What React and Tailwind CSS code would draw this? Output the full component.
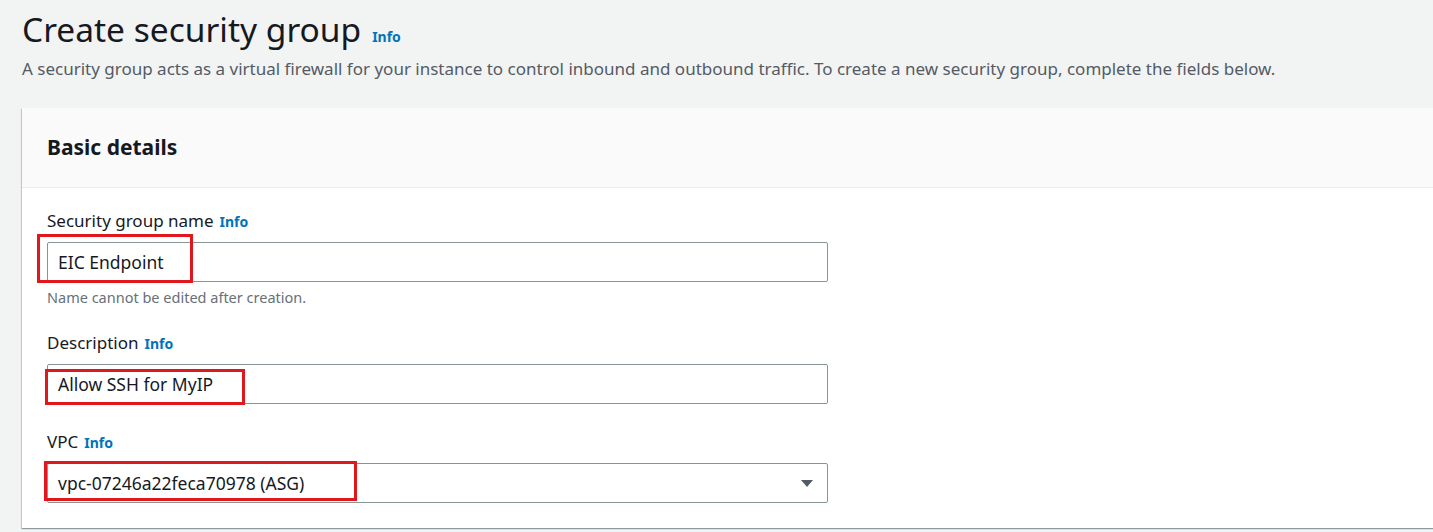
import React from 'react';

const Info = () => (
  <span className="ml-[6px] text-[14px] font-bold text-[#0073bb]">Info</span>
);

const Field = ({ label, children, hint }) => (
  <div>
    <div className="text-[17px] leading-[22px] text-[#16191f]">
      {label}
      <Info />
    </div>
    <div className="mt-[9px]">{children}</div>
    {hint && <div className="mt-[6px] text-[14.5px] leading-[18px] text-[#687078]">{hint}</div>}
  </div>
);

const TextInput = ({ value, box }) => (
  <div className="relative w-[781px]">
    <div className="h-[40px] rounded-[2px] border border-[#879596] bg-white px-[10px] flex items-center text-[17.5px] text-[#16191f]">
      {value}
    </div>
    {box}
  </div>
);

export default function App() {
  return (
    <div
      className="min-h-[532px] w-[1433px] overflow-hidden bg-[#f2f3f3] text-[#16191f]"
      style={{ fontFamily: '"Noto Sans", "Open Sans", Arial, sans-serif' }}
    >
      <div className="pl-[22px] pt-[4px]">
        <div className="flex items-baseline">
          <h1 className="text-[33.5px] leading-[50px] font-normal text-[#16191f]">Create security group</h1>
          <span className="ml-[11px] text-[14px] font-bold text-[#0073bb]">Info</span>
        </div>
        <p className="mt-[4px] text-[17px] leading-[22px] text-[#545b64]">
          A security group acts as a virtual firewall for your instance to control inbound and outbound traffic. To create a new security group, complete the fields below.
        </p>
      </div>

      <div className="ml-[22px] mt-[28px] mr-[-20px] bg-white shadow-[0_1px_1px_0_rgba(0,28,36,0.3),-1px_1px_1px_0_rgba(0,28,36,0.15)]">
        <div className="h-[80px] border-b border-[#eaeded] bg-[#fafafa] pl-[25px] flex items-center">
          <h2 className="text-[21px] font-bold text-[#16191f]">Basic details</h2>
        </div>
        <div className="pl-[25px] pt-[22px] pb-[25px] flex flex-col">
          <Field label="Security group name" hint="Name cannot be edited after creation.">
            <TextInput
              value="EIC Endpoint"
              box={<div className="absolute left-[-10px] top-[-8px] h-[49px] w-[156px] border-[3px] border-[#e0171c]" />}
            />
          </Field>
          <div className="mt-[26px]">
            <Field label="Description">
              <TextInput
                value="Allow SSH for MyIP"
                box={<div className="absolute left-[-2px] top-[5px] h-[36px] w-[200px] border-[3px] border-[#e0171c]" />}
              />
            </Field>
          </div>
          <div className="mt-[27px]">
            <Field label="VPC">
              <div className="relative w-[781px]">
                <div className="h-[40px] rounded-[2px] border border-[#879596] bg-white pl-[10px] pr-[12px] flex items-center justify-between text-[17.5px] text-[#16191f]">
                  <span>vpc-07246a22feca70978 (ASG)</span>
                  <svg width="14" height="10" viewBox="0 0 14 10" className="mr-[1px]">
                    <path d="M1 2 L13 2 L7 9 Z" fill="#545b64" />
                  </svg>
                </div>
                <div className="absolute left-[-3px] top-[-2px] h-[40px] w-[313px] border-[3px] border-[#e0171c]" />
              </div>
            </Field>
          </div>
        </div>
      </div>
    </div>
  );
}
